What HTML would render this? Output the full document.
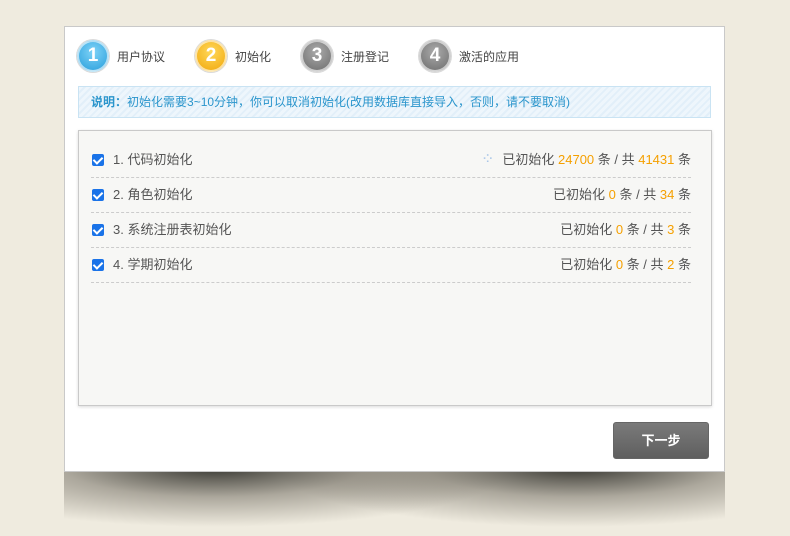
<!DOCTYPE html>
<html><head><meta charset="utf-8"><style>
*{margin:0;padding:0;box-sizing:border-box}
body{width:790px;height:536px;background:#efebdf;font-family:"Liberation Sans","Noto Sans CJK SC",sans-serif;position:relative;overflow:hidden}
.shadow{position:absolute;left:64px;top:472px;width:661px;height:64px;
background:
radial-gradient(ellipse 300px 60px at 150px -5px,rgba(35,35,30,.9),rgba(90,85,75,.45) 50%,rgba(239,235,223,0) 100%),
radial-gradient(ellipse 300px 60px at 511px -5px,rgba(35,35,30,.9),rgba(90,85,75,.45) 50%,rgba(239,235,223,0) 100%)}
.card{position:absolute;left:64px;top:26px;width:661px;height:446px;background:#fff;border:1px solid #c9c9c9}
.step{position:absolute;top:13px;height:32px;display:flex;align-items:center;font-size:12px;color:#444}
.num{width:32px;height:32px;border-radius:50%;color:#fff;font-weight:bold;font-size:19px;display:flex;align-items:center;justify-content:center;margin-right:8px;border:2px solid rgba(255,255,255,.6);box-shadow:0 0 0 1px rgba(0,0,0,.15)}
.note{position:absolute;left:13px;top:59px;width:633px;height:32px;border:1px solid #c9e3f3;background:repeating-linear-gradient(135deg,#eef6fc 0 3px,#e2eff9 3px 5px);font-size:12px;color:#2a95cc;line-height:30px;padding-left:12px}
.box{position:absolute;left:13px;top:103px;width:634px;height:276px;background:#f7f7f5;border:1px solid #c9c9c9;box-shadow:0 1px 3px rgba(0,0,0,.15)}
.row{position:absolute;left:12px;width:600px;height:35px;border-bottom:1px dashed #ccc;font-size:13px;color:#555;line-height:34px}
.row .cb{position:absolute;left:1px;top:11px;width:12px;height:12px;background:#1a73e8;border-radius:2px}
.row .cb:after{content:"";position:absolute;left:3px;top:1px;width:4px;height:7px;border:solid #fff;border-width:0 2px 2px 0;transform:rotate(45deg)}
.row .l{position:absolute;left:22px}
.row .r{position:absolute;right:0}
.o{color:#f5a000}
.btn{position:absolute;left:548px;top:395px;width:96px;height:37px;border-radius:3px;background:linear-gradient(#7a7a7a,#5f5f5f);border:1px solid #666;color:#fff;font-weight:bold;font-size:13px;text-align:center;line-height:35px}
</style></head><body>
<div class="shadow"></div>
<div class="card">
<div class="step" style="left:12px"><span class="num" style="background:radial-gradient(circle at 50% 35%,#7fd3f7,#2a9fdc)">1</span>用户协议</div>
<div class="step" style="left:130px"><span class="num" style="background:radial-gradient(circle at 50% 35%,#ffd85a,#f1a80c)">2</span>初始化</div>
<div class="step" style="left:236px"><span class="num" style="background:radial-gradient(circle at 50% 35%,#aaa,#6e6e6e)">3</span>注册登记</div>
<div class="step" style="left:354px"><span class="num" style="background:radial-gradient(circle at 50% 35%,#aaa,#6e6e6e)">4</span>激活的应用</div>
<div class="note"><b>说明：</b>初始化需要3~10分钟，你可以取消初始化(改用数据库直接导入，否则，请不要取消)</div>
<div class="box">
<div class="row" style="top:12px"><span class="cb"></span><span class="l">1. 代码初始化</span><span class="r"><span style="color:#a9c6e8;margin-right:8px;font-size:16px">⁘</span>已初始化 <span class="o">24700</span> 条 / 共 <span class="o">41431</span> 条</span></div>
<div class="row" style="top:47px"><span class="cb"></span><span class="l">2. 角色初始化</span><span class="r">已初始化 <span class="o">0</span> 条 / 共 <span class="o">34</span> 条</span></div>
<div class="row" style="top:82px"><span class="cb"></span><span class="l">3. 系统注册表初始化</span><span class="r">已初始化 <span class="o">0</span> 条 / 共 <span class="o">3</span> 条</span></div>
<div class="row" style="top:117px"><span class="cb"></span><span class="l">4. 学期初始化</span><span class="r">已初始化 <span class="o">0</span> 条 / 共 <span class="o">2</span> 条</span></div>
</div>
<div class="btn">下一步</div>
</div>
</body></html>
